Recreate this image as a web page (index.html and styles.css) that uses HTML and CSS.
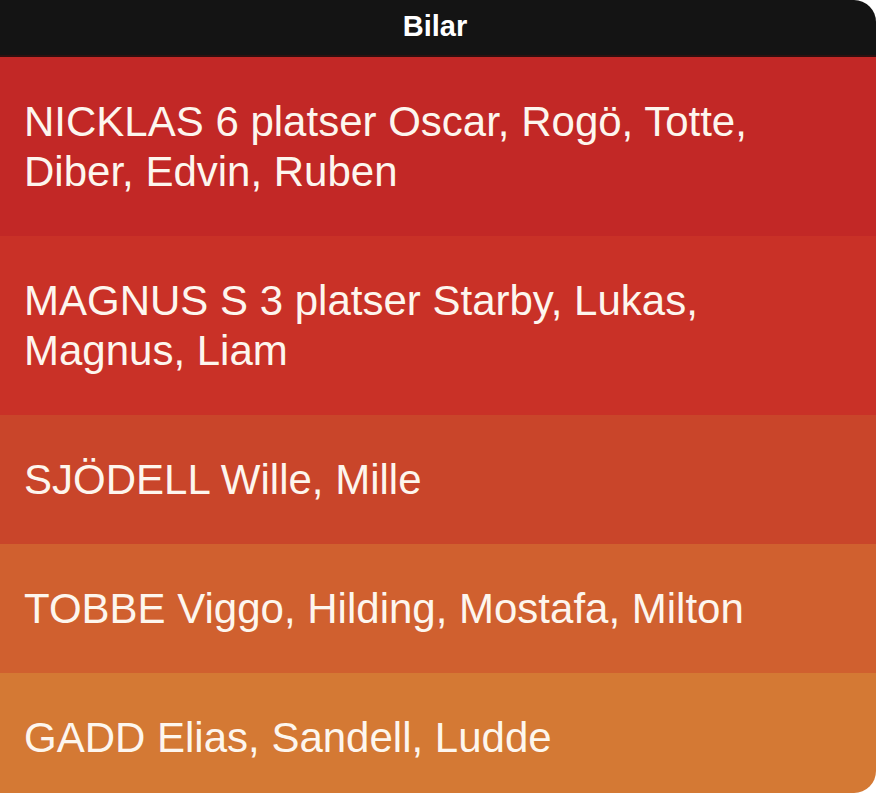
FILE: index.html
```html
<!DOCTYPE html>
<html lang="sv">
<head>
    <meta charset="UTF-8">
    <meta name="viewport" content="width=device-width, initial-scale=1.0">
    <title>Bilar</title>
    <link rel="stylesheet" href="styles.css">
</head>
<body>
    <div class="screen">
        <!-- Title bar -->
        <div class="titleBar">Bilar</div>

        <!-- Car list -->
        <div class="carList">
            <div class="car car1">NICKLAS 6 platser Oscar, Rogö, Totte, Diber, Edvin, Ruben</div>
            <div class="car car2">MAGNUS S 3 platser Starby, Lukas, Magnus, Liam</div>
            <div class="car car3">SJÖDELL Wille, Mille</div>
            <div class="car car4">TOBBE Viggo, Hilding, Mostafa, Milton</div>
            <div class="car car5">GADD Elias, Sandell, Ludde</div>
        </div>
    </div>
</body>
</html>
```

FILE: styles.css
```css
body {
    margin: 0;
    background-color: #ffffff;
}

.screen {
    width: 876px;
    height: 100vh;
    overflow: hidden;
    border-radius: 0 22px 22px 0;
    font-family: 'Liberation Sans', Arial, sans-serif;
}

.titleBar {
    height: 55px;
    line-height: 52px;
    background-color: #141414;
    border-bottom: 2px solid #2e1010;
    color: #ffffff;
    font-size: 29px;
    font-weight: bold;
    text-align: center;
    padding-right: 6px;
}

.car {
    padding: 40px 36px 39px 24px;
    font-size: 42px;
    line-height: 50px;
    color: #fdf6ee;
}

.car1 {
    background-color: #c22826;
}

.car2 {
    background-color: #c93127;
}

.car3 {
    background-color: #c9452a;
}

.car4 {
    background-color: #d0602f;
}

.car5 {
    background-color: #d47934;
}
```
